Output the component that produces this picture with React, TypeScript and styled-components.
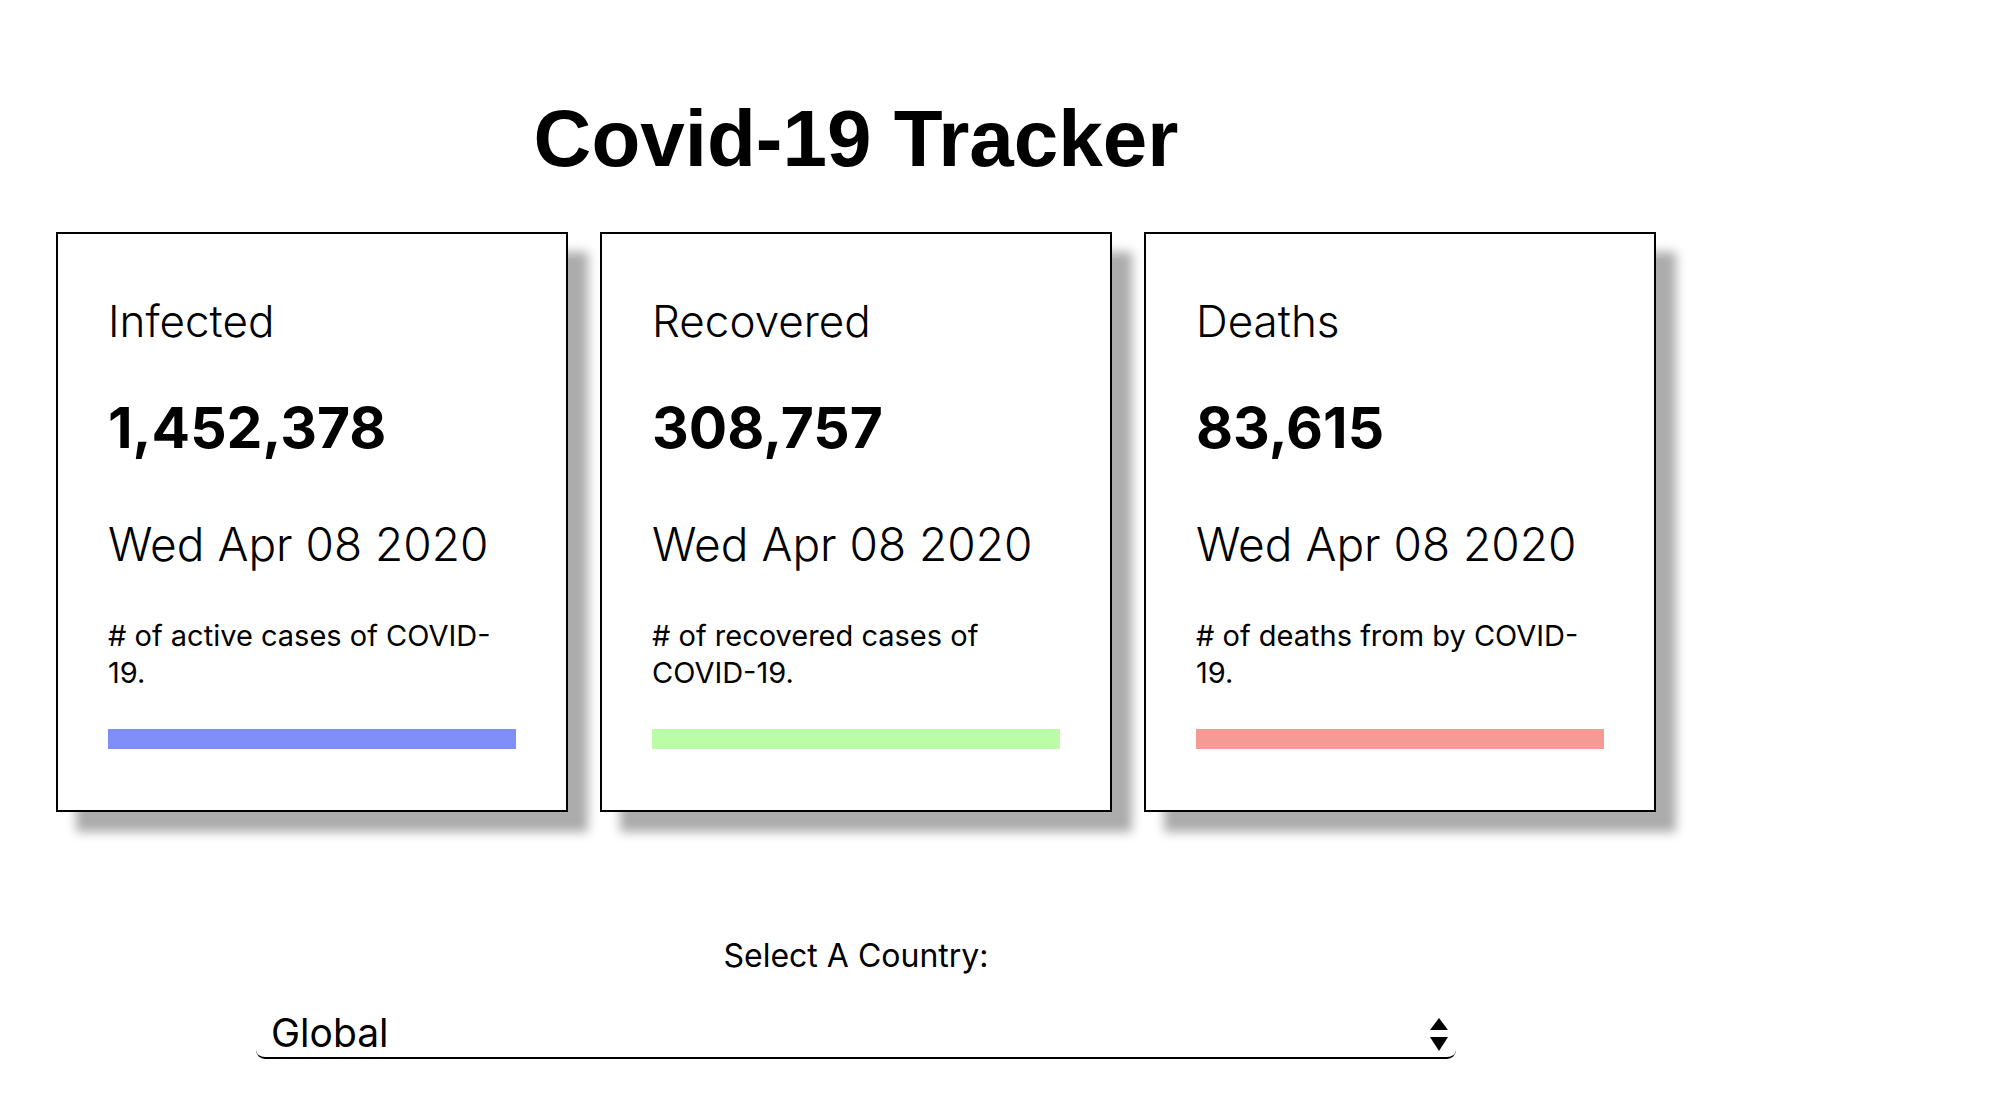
import styled, { createGlobalStyle } from "styled-components";

const GlobalStyle = createGlobalStyle`
    body {
        margin: 8px;
        background: #ffffff;
        color: #000000;
        font-family: Inter, "Noto Sans", sans-serif;
    }
`;

const Page = styled.div`
    width: 1600px;
    margin-left: 48px;
    display: flex;
    flex-direction: column;
    align-items: center;
`;

const Title = styled.h1`
    margin: 85px 0 47px;
    font-family: "Liberation Sans", Arial, sans-serif;
    font-size: 80px;
    font-weight: 700;
    line-height: 92px;
`;

const CardRow = styled.div`
    display: grid;
    grid-template-columns: repeat(3, 512px);
    gap: 32px;
`;

const Card = styled.div`
    box-sizing: border-box;
    height: 580px;
    padding: 61px 50px 0;
    border: 2px solid #000;
    background: #fff;
    box-shadow: 20px 20px 10px #acacac;
    display: flex;
    flex-direction: column;
`;

const Label = styled.div`
    font-size: 44px;
    font-weight: 300;
    line-height: 53px;
`;

const Count = styled.div`
    margin-top: 46px;
    font-size: 57px;
    font-weight: 700;
    line-height: 68px;
`;

const DateText = styled.div`
    margin-top: 55px;
    font-size: 46px;
    font-weight: 300;
    line-height: 54px;
`;

const Note = styled.div`
    margin-top: 46px;
    font-size: 29px;
    font-weight: 400;
    line-height: 37px;
`;

const Bar = styled.div<{ $color: string }>`
    margin-top: 38px;
    height: 20px;
    background: ${(p) => p.$color};
`;

const CountryPicker = styled.div`
    margin-top: 125px;
    width: 1200px;
    display: flex;
    flex-direction: column;
    align-items: center;
`;

const PickerLabel = styled.label`
    font-size: 32px;
    line-height: 38px;
`;

const SelectBox = styled.div`
    position: relative;
    box-sizing: border-box;
    width: 100%;
    margin-top: 28px;
    height: 56px;
    border-bottom: 2px solid #000;
    border-radius: 9px;
    display: flex;
    align-items: center;
`;

const Select = styled.select`
    appearance: none;
    width: 100%;
    height: 100%;
    border: none;
    background: transparent;
    padding: 5px 60px 0 15px;
    font-family: Inter, "Noto Sans", sans-serif;
    font-size: 39px;
    color: #000;
    outline: none;
`;

const Arrows = styled.svg`
    position: absolute;
    right: 8px;
    top: 15px;
    pointer-events: none;
`;

const stats = [
    {
        label: "Infected",
        count: "1,452,378",
        note: "# of active cases of COVID-19.",
        color: "#808ff8",
    },
    {
        label: "Recovered",
        count: "308,757",
        note: "# of recovered cases of COVID-19.",
        color: "#bdfca6",
    },
    {
        label: "Deaths",
        count: "83,615",
        note: "# of deaths from by COVID-19.",
        color: "#f59a94",
    },
];

export default function App() {
    return (
        <>
            <GlobalStyle />
            <Page>
                <Title>Covid-19 Tracker</Title>
                <CardRow>
                    {stats.map((s) => (
                        <Card key={s.label}>
                            <Label>{s.label}</Label>
                            <Count>{s.count}</Count>
                            <DateText>Wed Apr 08 2020</DateText>
                            <Note>{s.note}</Note>
                            <Bar $color={s.color} />
                        </Card>
                    ))}
                </CardRow>
                <CountryPicker>
                    <PickerLabel htmlFor="country">Select A Country:</PickerLabel>
                    <SelectBox>
                        <Select id="country" defaultValue="global">
                            <option value="global">Global</option>
                        </Select>
                        <Arrows width="18" height="34" viewBox="0 0 18 34">
                            <path d="M9 0 L18 12 L0 12 Z" fill="#000" />
                            <path d="M0 19 L18 19 L9 33 Z" fill="#000" />
                        </Arrows>
                    </SelectBox>
                </CountryPicker>
            </Page>
        </>
    );
}
